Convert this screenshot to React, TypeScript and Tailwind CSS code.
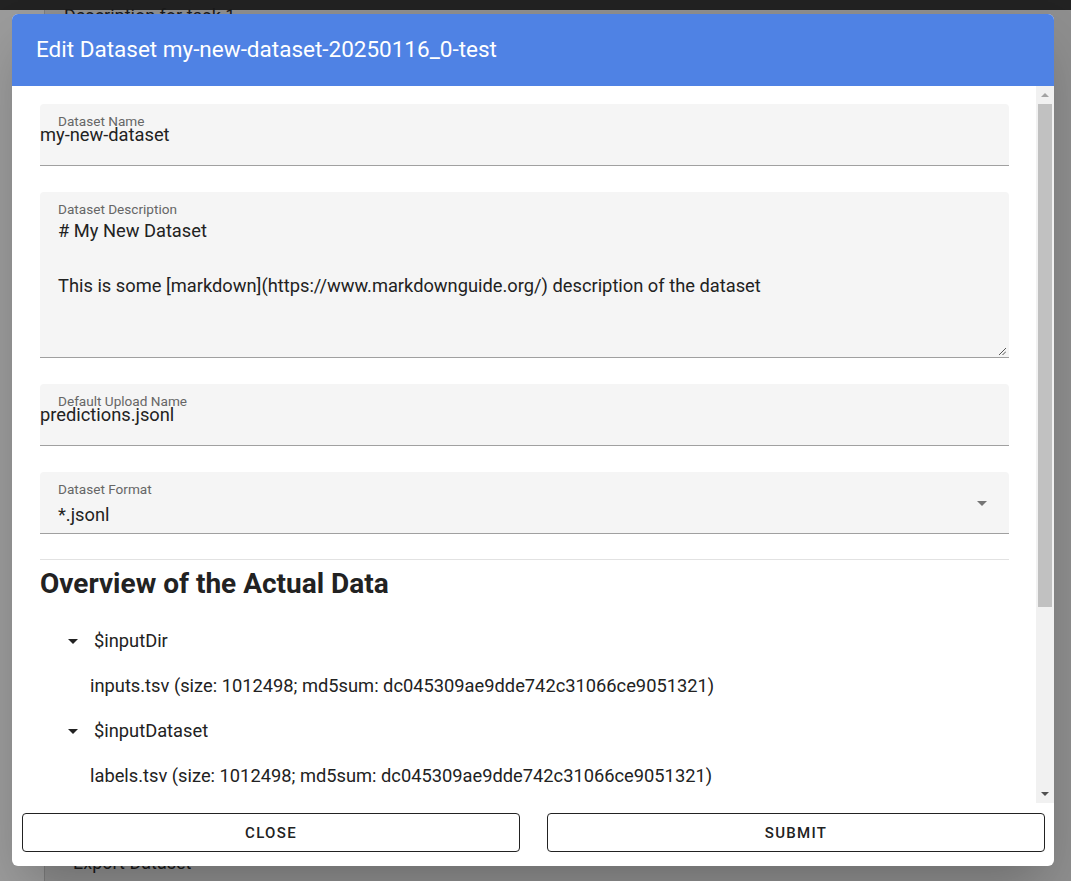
import React from "react";

function DropArrow({ className }: { className?: string }) {
  return (
    <svg viewBox="0 0 24 24" className={className} fill="currentColor">
      <path d="M7 10l5 5 5-5z" />
    </svg>
  );
}

function TreeNode({ name, file }: { name: string; file: string }) {
  return (
    <>
      <div className="h-[45px] flex items-center">
        <DropArrow className="w-6 h-6 ml-[21px] text-[#222]" />
        <span className="ml-[9px]">{name}</span>
      </div>
      <div className="h-[45px] flex items-center pl-[50px]">{file}</div>
    </>
  );
}

export default function App() {
  return (
    <div
      className="relative h-[881px] w-[1071px] overflow-hidden bg-[#9b9b9b] text-[#222]"
      style={{ fontFamily: "Roboto, 'Liberation Sans', sans-serif" }}
    >
      {/* dimmed page behind the modal */}
      <div className="h-[10px] bg-[#222]" />
      <div className="ml-[44px] h-[871px] bg-[#8e8e8e] border-l border-[#7c7c7c] flex flex-col justify-between">
        <div className="pl-[19px] mt-[-3px] text-[18px] leading-[18px] text-[#1a1a1a]">
          Description for task 1
        </div>
        <div className="pl-[28px] pb-[8px] text-[18px] leading-[20px] text-[#1a1a1a]">
          Export Dataset
        </div>
      </div>

      {/* modal */}
      <div className="absolute left-[12px] top-[14px] w-[1042px] h-[852px] bg-white rounded-[6px] shadow-2xl flex flex-col overflow-hidden">
        <div className="h-[72px] shrink-0 bg-[#4f82e4] flex items-center pl-[24px] text-white text-[22.5px]">
          Edit Dataset my-new-dataset-20250116_0-test
        </div>

        <div className="h-[717px] flex">
          <div className="flex-1 overflow-hidden pl-[28px] pr-[27px] pt-[18px] text-[18.3px]">
            {/* Dataset Name */}
            <div className="h-[62px] bg-[#f5f5f5] rounded-t-[4px] border-b border-[#a0a0a0]">
              <div className="pl-[18px] pt-[10px] text-[13.6px] leading-[14px] text-[#666]">Dataset Name</div>
              <div className="leading-[14px]">my-new-dataset</div>
            </div>

            {/* Dataset Description */}
            <div className="relative mt-[26px] h-[166px] bg-[#f5f5f5] rounded-t-[4px] border-b border-[#a0a0a0] px-[18px]">
              <div className="pt-[10px] text-[13.6px] leading-[14px] text-[#666]">Dataset Description</div>
              <div className="mt-[1px] leading-[27.5px]">
                <div># My New Dataset</div>
                <div>&nbsp;</div>
                <div>This is some [markdown](https://www.markdownguide.org/) description of the dataset</div>
              </div>
              <svg className="absolute right-[3px] bottom-[2px] w-[7px] h-[7px]" viewBox="0 0 7 7" stroke="#555" strokeWidth="1">
                <line x1="0" y1="7" x2="7" y2="0" />
                <line x1="3.5" y1="7" x2="7" y2="3.5" />
              </svg>
            </div>

            {/* Default Upload Name */}
            <div className="mt-[26px] h-[62px] bg-[#f5f5f5] rounded-t-[4px] border-b border-[#a0a0a0]">
              <div className="pl-[18px] pt-[10px] text-[13.6px] leading-[14px] text-[#666]">Default Upload Name</div>
              <div className="leading-[14px]">predictions.jsonl</div>
            </div>

            {/* Dataset Format */}
            <div className="mt-[26px] h-[62px] bg-[#f5f5f5] rounded-t-[4px] border-b border-[#a0a0a0] flex items-start">
              <div className="flex-1 pl-[18px]">
                <div className="pt-[10px] text-[13.6px] leading-[14px] text-[#666]">Dataset Format</div>
                <div className="mt-[10px] leading-[18px]">*.jsonl</div>
              </div>
              <DropArrow className="w-6 h-6 mt-[19px] mr-[15px] text-[#757575]" />
            </div>

            <div className="mt-[25px] h-px bg-[#e2e2e2]" />

            <h2 className="mt-[9px] text-[28px] leading-[30px] font-bold">Overview of the Actual Data</h2>

            <div className="mt-[19px]">
              <TreeNode name="$inputDir" file="inputs.tsv (size: 1012498; md5sum: dc045309ae9dde742c31066ce9051321)" />
              <TreeNode name="$inputDataset" file="labels.tsv (size: 1012498; md5sum: dc045309ae9dde742c31066ce9051321)" />
            </div>
          </div>

          {/* scrollbar */}
          <div className="w-[18px] bg-[#f1f1f1] flex flex-col items-center">
            <div className="h-[18px] flex items-center justify-center">
              <div className="w-0 h-0 border-l-[4px] border-r-[4px] border-b-[4px] border-l-transparent border-r-transparent border-b-[#a3a3a3]" />
            </div>
            <div className="w-[14px] h-[503px] bg-[#c1c1c1]" />
            <div className="flex-1" />
            <div className="h-[18px] flex items-center justify-center">
              <div className="w-0 h-0 border-l-[4px] border-r-[4px] border-t-[4px] border-l-transparent border-r-transparent border-t-[#505050]" />
            </div>
          </div>
        </div>

        <div className="flex pl-[10px] pr-[9px] pt-[10px] gap-[27px]">
          <button className="flex-1 h-[39px] pt-[1px] rounded-[4px] border border-[#222] text-[15px] font-medium tracking-[1.3px] text-[#222]">
            CLOSE
          </button>
          <button className="flex-1 h-[39px] pt-[1px] rounded-[4px] border border-[#222] text-[15px] font-medium tracking-[1.3px] text-[#222]">
            SUBMIT
          </button>
        </div>
      </div>
    </div>
  );
}
